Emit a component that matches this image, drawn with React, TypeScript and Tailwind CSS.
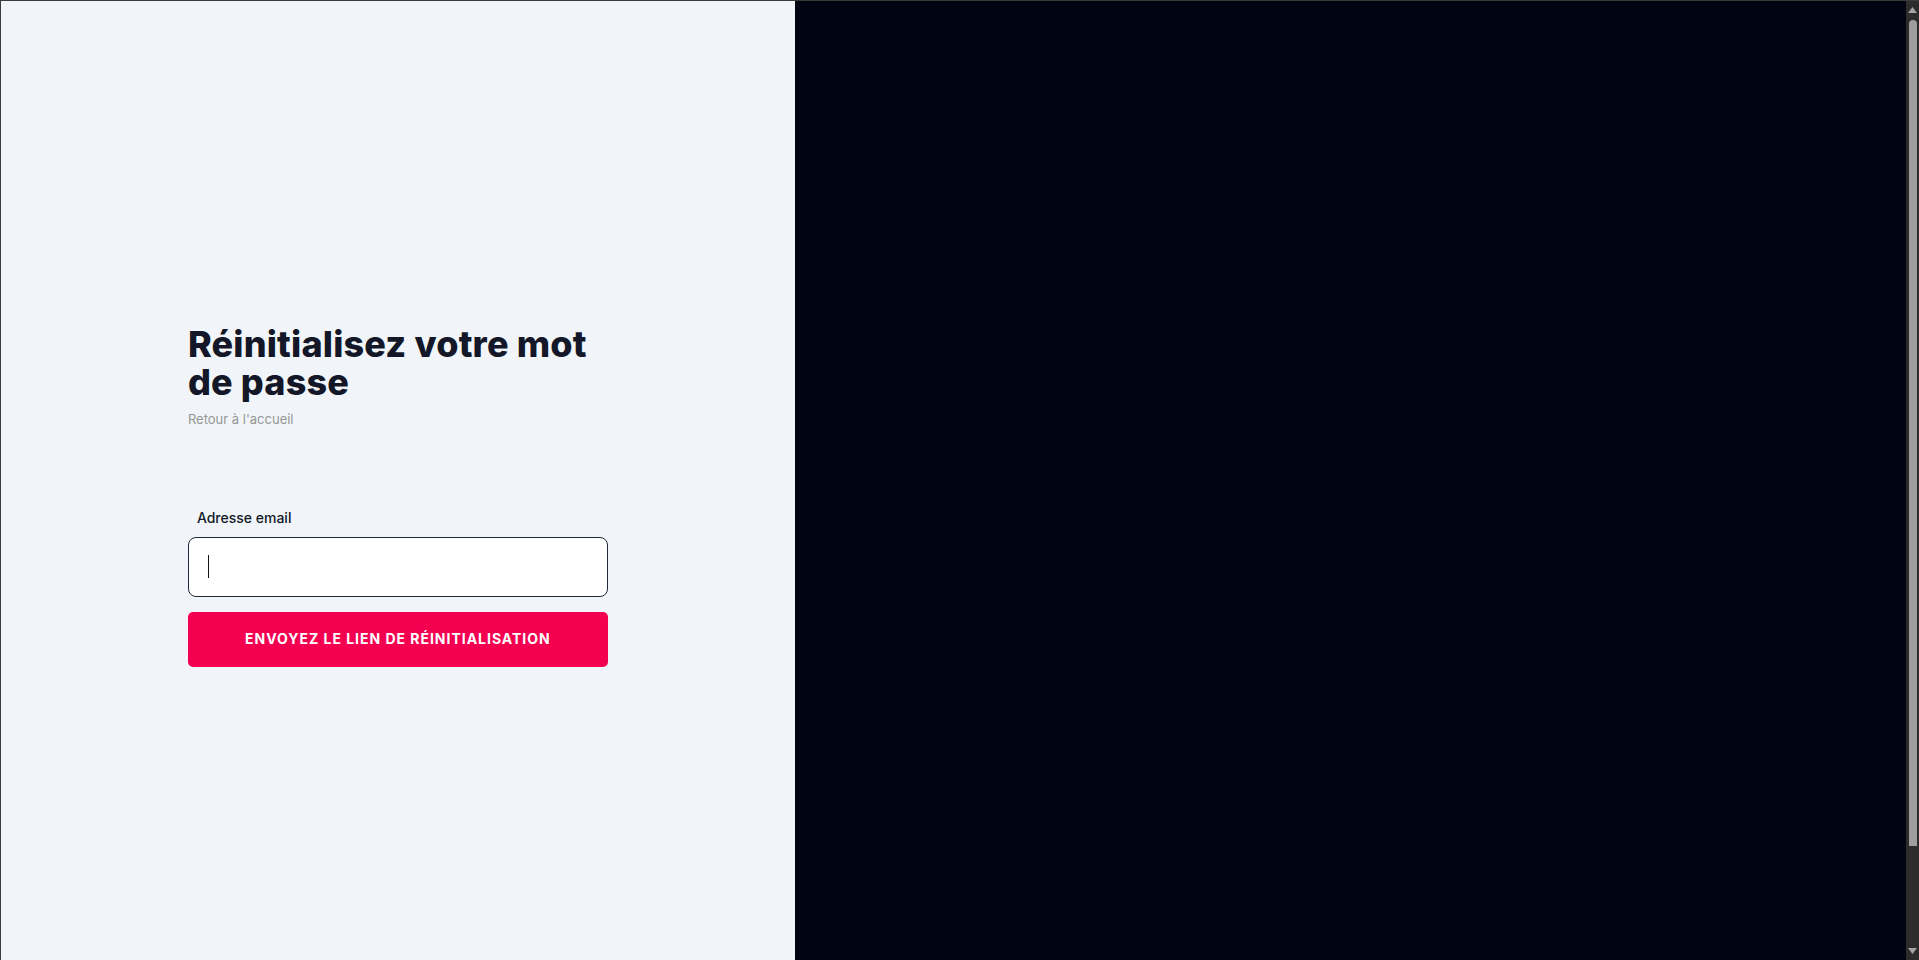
export default function App() {
  return (
    <div className="flex h-[960px] overflow-hidden border-t border-[#3a3a3a] font-['Inter',sans-serif]">
      <div className="flex flex-1 border-l border-[#3a3a3a]">
        <div className="flex w-5/12 justify-center bg-[#f1f5f9]">
          <div className="w-[420px] pt-[324px]">
            <h1 className="text-[36px] font-extrabold leading-[38px] tracking-[0.005em] text-[#131728]">
              Réinitialisez votre mot de passe
            </h1>
            <a href="#" className="mt-[9px] block text-[13px] text-[#959595]">
              Retour à l'accueil
            </a>
            <form className="mt-[78px]" onSubmit={(e) => e.preventDefault()}>
              <label htmlFor="email" className="block px-[9px] text-sm font-medium text-[#111827]">
                Adresse email
              </label>
              <div className="relative mt-[9px]">
                <input
                  id="email"
                  type="email"
                  className="h-[60px] w-full rounded-lg border border-[#1f2937] bg-white px-5 text-base outline-none"
                />
                <span className="absolute left-[20px] top-[18px] h-[23px] w-px bg-[#111]" />
              </div>
              <button
                type="submit"
                className="mt-[15px] h-[55px] w-full rounded-[5px] bg-[#f40051] text-sm font-bold uppercase tracking-[0.07em] text-white"
              >
                Envoyez le lien de réinitialisation
              </button>
            </form>
          </div>
        </div>
        <div className="w-7/12 bg-[#010413]" />
      </div>

      {/* window scrollbar */}
      <div className="flex w-[13px] flex-col items-center bg-[#2c2c2c]">
        <svg width="9" height="6" viewBox="0 0 9 6" className="mt-[6px]">
          <path d="M0 6 L4.5 0 L9 6 Z" fill="#a3a3a3" />
        </svg>
        <div className="mt-[7px] h-[826px] w-[8px] rounded-t-full rounded-b-[4px] bg-[#9e9e9e]" />
        <div className="flex-1" />
        <svg width="9" height="6" viewBox="0 0 9 6" className="mb-[6px]">
          <path d="M0 0 L9 0 L4.5 6 Z" fill="#a3a3a3" />
        </svg>
      </div>
    </div>
  );
}
